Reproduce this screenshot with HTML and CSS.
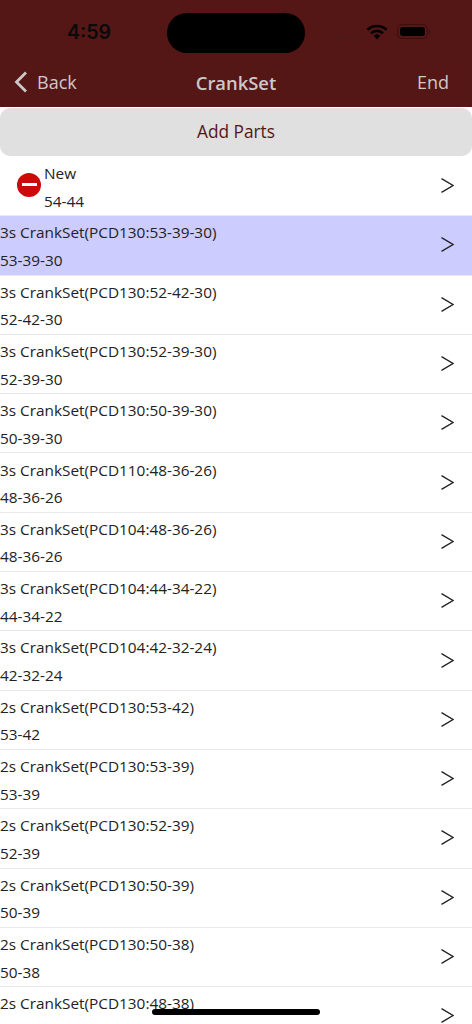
FILE: index.html
```html
<!DOCTYPE html>
<html lang="en">
<head>
    <meta charset="UTF-8">
    <meta name="viewport" content="width=device-width, initial-scale=1.0">
    <title>CrankSet</title>
    <link rel="stylesheet" href="styles.css">
</head>
<body>
    <header class="header">
        <div class="status-bar">
            <span class="time">4:59</span>
            <div class="island"></div>
            <div class="status-icons">
                <div class="signal"><i></i><i></i><i></i><i></i></div>
                <svg class="wifi" width="22" height="16" viewBox="0 0 22 16">
                    <path d="M1.500 5.700A14 14 0 0 1 20.500 5.700" fill="none" stroke="#000" stroke-width="2.600"/>
                    <path d="M5 9.200A9 9 0 0 1 17 9.200" fill="none" stroke="#000" stroke-width="2.600"/>
                    <path d="M7.600 11.800A5.200 5.200 0 0 1 14.400 11.800L11 15.500Z" fill="#000"/>
                </svg>
                <div class="battery"><div class="battery-fill"></div></div>
                <div class="battery-cap"></div>
            </div>
        </div>
        <nav class="nav-bar">
            <div class="back">
                <svg class="back-icon" width="14" height="22" viewBox="0 0 14 22">
                    <path d="M12 1.500L2.500 11L12 20.500" fill="none" stroke="#cfc8c8" stroke-width="2.800"/>
                </svg>
                <span>Back</span>
            </div>
            <span class="nav-title">CrankSet</span>
            <span class="nav-end">End</span>
        </nav>
    </header>

    <button class="add-button">Add Parts</button>

    <div class="list">
        <div class="row row-new">
            <div class="minus"><div class="minus-bar"></div></div>
            <div class="row-text"><p>New</p><p>54-44</p></div>
            <svg class="chevron" width="13" height="15" viewBox="0 0 13 15"><path d="M0.500 0.600L12 7.500L0.500 14.400" fill="none" stroke="#222" stroke-width="1.300"/></svg>
        </div>
        <div class="row selected">
            <div class="row-text"><p>3s CrankSet(PCD130:53-39-30)</p><p>53-39-30</p></div>
            <svg class="chevron" width="13" height="15" viewBox="0 0 13 15"><path d="M0.500 0.600L12 7.500L0.500 14.400" fill="none" stroke="#222" stroke-width="1.300"/></svg>
        </div>
        <div class="row">
            <div class="row-text"><p>3s CrankSet(PCD130:52-42-30)</p><p>52-42-30</p></div>
            <svg class="chevron" width="13" height="15" viewBox="0 0 13 15"><path d="M0.500 0.600L12 7.500L0.500 14.400" fill="none" stroke="#222" stroke-width="1.300"/></svg>
        </div>
        <div class="row">
            <div class="row-text"><p>3s CrankSet(PCD130:52-39-30)</p><p>52-39-30</p></div>
            <svg class="chevron" width="13" height="15" viewBox="0 0 13 15"><path d="M0.500 0.600L12 7.500L0.500 14.400" fill="none" stroke="#222" stroke-width="1.300"/></svg>
        </div>
        <div class="row">
            <div class="row-text"><p>3s CrankSet(PCD130:50-39-30)</p><p>50-39-30</p></div>
            <svg class="chevron" width="13" height="15" viewBox="0 0 13 15"><path d="M0.500 0.600L12 7.500L0.500 14.400" fill="none" stroke="#222" stroke-width="1.300"/></svg>
        </div>
        <div class="row">
            <div class="row-text"><p>3s CrankSet(PCD110:48-36-26)</p><p>48-36-26</p></div>
            <svg class="chevron" width="13" height="15" viewBox="0 0 13 15"><path d="M0.500 0.600L12 7.500L0.500 14.400" fill="none" stroke="#222" stroke-width="1.300"/></svg>
        </div>
        <div class="row">
            <div class="row-text"><p>3s CrankSet(PCD104:48-36-26)</p><p>48-36-26</p></div>
            <svg class="chevron" width="13" height="15" viewBox="0 0 13 15"><path d="M0.500 0.600L12 7.500L0.500 14.400" fill="none" stroke="#222" stroke-width="1.300"/></svg>
        </div>
        <div class="row">
            <div class="row-text"><p>3s CrankSet(PCD104:44-34-22)</p><p>44-34-22</p></div>
            <svg class="chevron" width="13" height="15" viewBox="0 0 13 15"><path d="M0.500 0.600L12 7.500L0.500 14.400" fill="none" stroke="#222" stroke-width="1.300"/></svg>
        </div>
        <div class="row">
            <div class="row-text"><p>3s CrankSet(PCD104:42-32-24)</p><p>42-32-24</p></div>
            <svg class="chevron" width="13" height="15" viewBox="0 0 13 15"><path d="M0.500 0.600L12 7.500L0.500 14.400" fill="none" stroke="#222" stroke-width="1.300"/></svg>
        </div>
        <div class="row">
            <div class="row-text"><p>2s CrankSet(PCD130:53-42)</p><p>53-42</p></div>
            <svg class="chevron" width="13" height="15" viewBox="0 0 13 15"><path d="M0.500 0.600L12 7.500L0.500 14.400" fill="none" stroke="#222" stroke-width="1.300"/></svg>
        </div>
        <div class="row">
            <div class="row-text"><p>2s CrankSet(PCD130:53-39)</p><p>53-39</p></div>
            <svg class="chevron" width="13" height="15" viewBox="0 0 13 15"><path d="M0.500 0.600L12 7.500L0.500 14.400" fill="none" stroke="#222" stroke-width="1.300"/></svg>
        </div>
        <div class="row">
            <div class="row-text"><p>2s CrankSet(PCD130:52-39)</p><p>52-39</p></div>
            <svg class="chevron" width="13" height="15" viewBox="0 0 13 15"><path d="M0.500 0.600L12 7.500L0.500 14.400" fill="none" stroke="#222" stroke-width="1.300"/></svg>
        </div>
        <div class="row">
            <div class="row-text"><p>2s CrankSet(PCD130:50-39)</p><p>50-39</p></div>
            <svg class="chevron" width="13" height="15" viewBox="0 0 13 15"><path d="M0.500 0.600L12 7.500L0.500 14.400" fill="none" stroke="#222" stroke-width="1.300"/></svg>
        </div>
        <div class="row">
            <div class="row-text"><p>2s CrankSet(PCD130:50-38)</p><p>50-38</p></div>
            <svg class="chevron" width="13" height="15" viewBox="0 0 13 15"><path d="M0.500 0.600L12 7.500L0.500 14.400" fill="none" stroke="#222" stroke-width="1.300"/></svg>
        </div>
        <div class="row row-last">
            <div class="row-text"><p>2s CrankSet(PCD130:48-38)</p></div>
            <svg class="chevron" width="13" height="15" viewBox="0 0 13 15"><path d="M0.500 0.600L12 7.500L0.500 14.400" fill="none" stroke="#222" stroke-width="1.300"/></svg>
        </div>
    </div>

    <div class="home-bar"></div>
</body>
</html>
```

FILE: styles.css
```css
html, body{
    margin: 0;
    height: 1024px;
    overflow: hidden;
}
body{
    position: relative;
    background-color: #fff;
    color: #222;
    font-family: "Open Sans", sans-serif;
}
.header{
    background-color: #551616;
    height: 107px;
}
.status-bar{
    height: 63px;
    position: relative;
    display: flex;
    align-items: center;
}
.time{
    margin-left: 67px;
    font-family: Inter, sans-serif;
    font-size: 19.500px;
    font-weight: 600;
    color: #0a0a0a;
}
.island{
    position: absolute;
    left: 167px;
    top: 13px;
    width: 138px;
    height: 40px;
    border-radius: 20px;
    background-color: #000;
}
.status-icons{
    margin-left: auto;
    margin-right: 42px;
    display: flex;
    align-items: center;
}
.signal{
    display: flex;
    gap: 2.300px;
    margin: 11px 8px 0 0;
}
.signal i{
    width: 4px;
    height: 4px;
    border-radius: 50%;
    background-color: #4a1c1c;
}
.wifi{
    margin-right: 9px;
}
.battery{
    box-sizing: border-box;
    width: 31px;
    height: 15px;
    padding: 2px;
    border: 1px solid #3e0e0e;
    border-radius: 5px;
}
.battery-fill{
    width: 100%;
    height: 100%;
    background-color: #000;
    border-radius: 3px;
}
.battery-cap{
    width: 1px;
    height: 4px;
    margin-left: 1px;
    background-color: #3e0e0e;
}
.nav-bar{
    height: 38px;
    position: relative;
    display: flex;
    align-items: center;
    justify-content: space-between;
    color: #cfc8c8;
    font-size: 18px;
}
.back{
    display: flex;
    align-items: center;
    gap: 9px;
    margin-left: 14px;
}
.nav-title{
    position: absolute;
    left: 0;
    right: 0;
    text-align: center;
    font-weight: 600;
    font-size: 18.400px;
}
.nav-end{
    margin-right: 23px;
}
.add-button{
    display: block;
    width: 100%;
    height: 48px;
    margin: 1px 0;
    padding: 0 0 2px;
    border: none;
    border-radius: 10px;
    background-color: #e0e0e0;
    color: #551616;
    font-family: "Open Sans", sans-serif;
    font-size: 17.300px;
}
.row{
    height: 59.300px;
    box-sizing: border-box;
    display: flex;
    align-items: center;
    border-bottom: 1px solid #e8e8e8;
    font-size: 15.350px;
}
.row-text{
    flex: 1;
    padding-top: 3px;
}
.row-text p{
    margin: 0;
    line-height: 27.600px;
}
.row-last .row-text{
    padding-bottom: 27.600px;
}
.selected{
    background-color: #ccccff;
}
.row-new{
    position: relative;
    padding-left: 44px;
}
.minus{
    position: absolute;
    left: 17px;
    top: 15.500px;
    width: 24px;
    height: 24px;
    border-radius: 50%;
    background-color: #cc0a0a;
    display: flex;
    align-items: center;
    justify-content: center;
}
.minus-bar{
    width: 15px;
    height: 3px;
    background-color: #fff;
}
.chevron{
    margin: 0 18px 1px 0;
}
.home-bar{
    position: absolute;
    left: 152px;
    top: 1009px;
    width: 168px;
    height: 6px;
    border-radius: 3px;
    background-color: #000;
}
```
